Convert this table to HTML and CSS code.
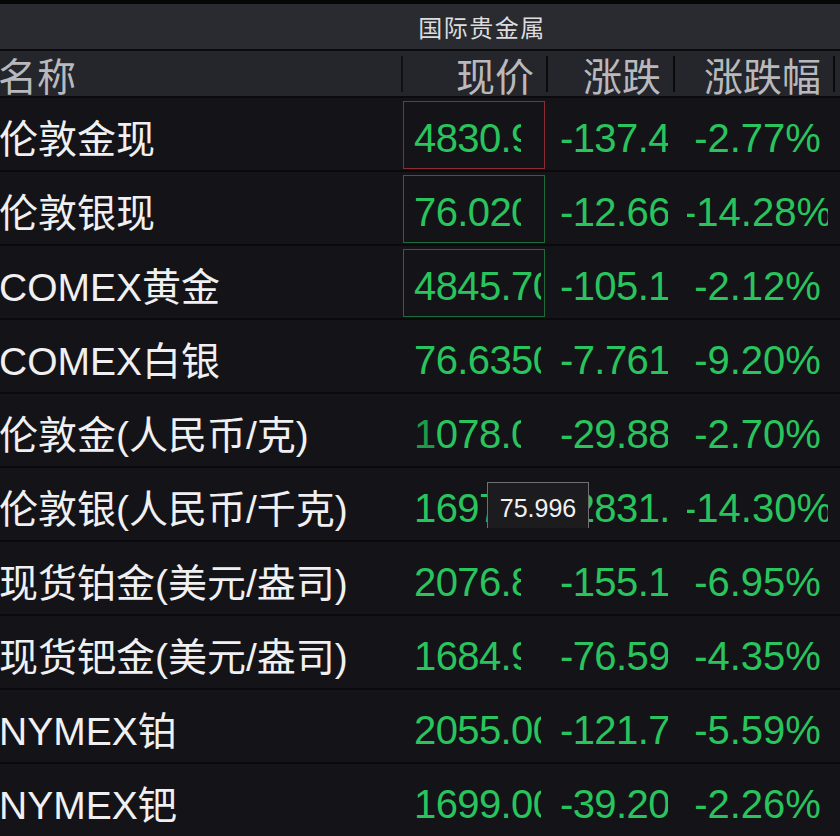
FILE: index.html
```html
<!DOCTYPE html>
<html lang="zh-CN">
<head>
<meta charset="utf-8">
<title>国际贵金属</title>
<link rel="stylesheet" href="styles.css">
</head>
<body>
<div class="screen">
  <div class="topband"></div>
  <div class="titlebar"><span class="title">国际贵金属</span></div>
  <div class="header">
    <div class="hcell hname">名称</div>
    <div class="hcell">现价</div>
    <div class="hcell">涨跌</div>
    <div class="hcell">涨跌幅</div>
    <div class="hrest"></div>
  </div>
  <div class="rows">
    <div class="row">
      <div class="name">伦敦金现</div>
      <div class="price"><span class="box box-red short"><span class="val">4830.91</span></span></div>
      <div class="chg">-137.45</div>
      <div class="pct">-2.77%</div>
    </div>
    <div class="row">
      <div class="name">伦敦银现</div>
      <div class="price"><span class="box box-green short"><span class="val">76.0200</span></span></div>
      <div class="chg">-12.668</div>
      <div class="pct">-14.28%</div>
    </div>
    <div class="row">
      <div class="name">COMEX黄金</div>
      <div class="price"><span class="box box-green"><span class="val">4845.70</span></span></div>
      <div class="chg">-105.10</div>
      <div class="pct">-2.12%</div>
    </div>
    <div class="row">
      <div class="name">COMEX白银</div>
      <div class="price"><span class="box"><span class="val">76.6350</span></span></div>
      <div class="chg">-7.7610</div>
      <div class="pct">-9.20%</div>
    </div>
    <div class="row">
      <div class="name">伦敦金(人民币/克)</div>
      <div class="price"><span class="box short"><span class="val"><span class="fade">1</span>078.00</span></span></div>
      <div class="chg">-29.880</div>
      <div class="pct">-2.70%</div>
    </div>
    <div class="row">
      <div class="name">伦敦银(人民币/千克)</div>
      <div class="price"><span class="box"><span class="val">16970.0</span></span></div>
      <div class="chg">-2831.00</div>
      <div class="pct">-14.30%</div>
      <div class="tooltip">75.996</div>
    </div>
    <div class="row">
      <div class="name">现货铂金(美元/盎司)</div>
      <div class="price"><span class="box short"><span class="val">2076.80</span></span></div>
      <div class="chg">-155.10</div>
      <div class="pct">-6.95%</div>
    </div>
    <div class="row">
      <div class="name">现货钯金(美元/盎司)</div>
      <div class="price"><span class="box short"><span class="val">1684.90</span></span></div>
      <div class="chg">-76.590</div>
      <div class="pct">-4.35%</div>
    </div>
    <div class="row">
      <div class="name">NYMEX铂</div>
      <div class="price"><span class="box"><span class="val">2055.00</span></span></div>
      <div class="chg">-121.70</div>
      <div class="pct">-5.59%</div>
    </div>
    <div class="row">
      <div class="name">NYMEX钯</div>
      <div class="price"><span class="box"><span class="val">1699.00</span></span></div>
      <div class="chg">-39.200</div>
      <div class="pct">-2.26%</div>
    </div>
  </div>
</div>
</body>
</html>
```

FILE: styles.css
```css
* { box-sizing: border-box; }
html, body {
  margin: 0;
  padding: 0;
  background: #131317;
  overflow: hidden;
}
.screen {
  width: 840px;
  height: 836px;
  overflow: hidden;
  font-family: "Liberation Sans", "Noto Sans CJK SC", sans-serif;
}
.topband {
  height: 4px;
  background: #060607;
}
.titlebar {
  height: 47px;
  background: #2a2b30;
  border-bottom: 2px solid #0c0c0e;
  display: flex;
  align-items: center;
  justify-content: center;
  padding-left: 124px;
}
.title {
  font-family: "Noto Sans CJK SC", sans-serif;
  font-size: 24px;
  color: #dcdcde;
  letter-spacing: 1.5px;
}
.header {
  height: 47px;
  background: #25262b;
  border-bottom: 2px solid #0b0b0d;
  display: grid;
  grid-template-columns: 403px 145px 127px 160px 5px;
  align-items: center;
}
.hcell {
  height: 36px;
  line-height: 36px;
  border-right: 2px solid #0a0a0b;
  font-family: "Noto Sans CJK SC", sans-serif;
  font-size: 39px;
  color: #b9b9bd;
  text-align: right;
  padding-right: 12px;
  white-space: nowrap;
  overflow: visible;
}
.hcell.hname {
  text-align: left;
  padding-left: 0;
  margin-left: -2px;
  border-right-color: #111113;
}
.rows {
  display: flex;
  flex-direction: column;
}
.row {
  position: relative;
  height: 74px;
  border-bottom: 2px solid #0a0a0c;
  background: #141418;
  display: grid;
  grid-template-columns: 403px 145px 127px 160px;
  align-items: stretch;
}
.name {
  display: flex;
  align-items: center;
  font-size: 39px;
  color: #f0f0f2;
  white-space: nowrap;
  overflow: hidden;
  padding-top: 4px;
  margin-left: -1px;
}
.price {
  padding: 3px 3px 1px 0;
  display: flex;
}
.box {
  flex: 1;
  display: flex;
  align-items: center;
  padding: 7px 3px 0 10px;
  border: 1.5px solid transparent;
  min-width: 0;
}
.val {
  flex: 1;
  min-width: 0;
  display: block;
  font-size: 40px;
  letter-spacing: -0.6px;
  color: #29c45d;
  white-space: nowrap;
  overflow: hidden;
}
.short .val { margin-right: 20px; }
.box-red { border-color: #8e2a31; }
.box-green { border-color: #1f6a3b; }
.fade { color: #1f9a4a; }
.chg, .pct {
  display: flex;
  align-items: center;
  padding-top: 8px;
  font-size: 40px;
  letter-spacing: -0.6px;
  color: #29c45d;
  white-space: nowrap;
  overflow: hidden;
}
.chg {
  padding-left: 12px;
  margin-right: 7px;
}
.pct {
  margin-left: 12px;
  margin-right: 7px;
  justify-content: center;
  letter-spacing: 0;
}
.tooltip {
  position: absolute;
  left: 487px;
  top: 14px;
  width: 102px;
  height: 46px;
  background: #1c1c1f;
  border: 1.5px solid #707074;
  border-bottom: none;
  color: #f2f2f2;
  font-size: 25px;
  display: flex;
  align-items: center;
  justify-content: center;
  padding-top: 5px;
}
```
